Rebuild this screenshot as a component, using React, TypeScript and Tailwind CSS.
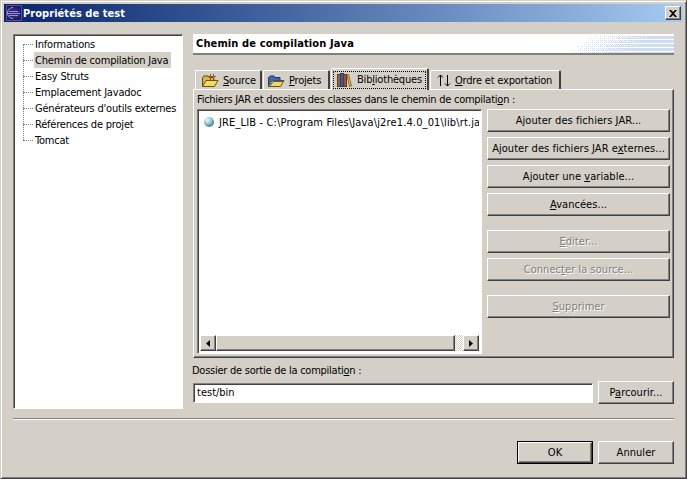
import React from "react";

const raised =
  "border border-t-white border-l-white border-r-[#404040] border-b-[#404040] shadow-[inset_-1px_-1px_0_#808080]";
const sunken =
  "border border-t-[#808080] border-l-[#808080] border-r-white border-b-white shadow-[inset_1px_1px_0_#404040]";

function Btn({ children, disabled, className = "" }: { children: React.ReactNode; disabled?: boolean; className?: string }) {
  return (
    <div
      className={`flex items-center justify-center h-[23px] text-[11px] leading-none tracking-[0.05px] ${raised} ${
        disabled ? "text-[#808080] [text-shadow:1px_1px_0_#fff]" : "text-black"
      } ${className}`}
    >
      <span>{children}</span>
    </div>
  );
}

const FolderOpen = ({ blue }: { blue?: boolean }) => (
  <svg width="18" height="14" viewBox="0 0 18 14" className="shrink-0">
    <path d="M1.500 12.500V3.500L3 2h4l1 1.500h5V6" fill={blue ? "#3f68b0" : "#d8b850"} stroke={blue ? "#203868" : "#5a4a10"} />
    <path d="M1.500 12.500 5 6.500h12l-3.500 6z" fill="#f4d868" stroke="#6a5410" />
    {!blue && <path d="M9.500 0v6M12.500 0v6M7 2.500h8" stroke="#a85020" strokeWidth="1" />}
    {blue && <path d="M3.500 11.500 6 7.500h10" stroke="#3058a0" strokeWidth="1" fill="none" />}
  </svg>
);

const Books = () => (
  <svg width="15" height="14" viewBox="0 0 15 14" className="shrink-0">
    <rect x="0.500" y="1.500" width="3" height="12" fill="#8a6a38" stroke="#5a4020" />
    <rect x="3.500" y="0.500" width="3" height="13" fill="#3c5ca0" stroke="#283c68" />
    <rect x="6.500" y="1.500" width="3" height="12" fill="#a8483a" stroke="#6a3020" />
    <path d="M10 2l1.500-.5 3 11.500-2 .5z" fill="#e8c458" stroke="#8a6a28" />
  </svg>
);

const Arrows = () => (
  <svg width="14" height="13" viewBox="0 0 14 13" className="shrink-0" fill="none" stroke="#000">
    <path d="M3.500 12V1M1 3.500 3.500 1 6 3.500M10.500 1v11M8 9.500 10.500 12 13 9.500" />
  </svg>
);

const Gem = () => (
  <svg width="12" height="12" viewBox="0 0 12 12" className="shrink-0">
    <defs>
      <radialGradient id="g" cx="0.35" cy="0.3" r="0.8">
        <stop offset="0" stopColor="#f4fbfa" />
        <stop offset="0.5" stopColor="#8fc4c8" />
        <stop offset="1" stopColor="#2f6a80" />
      </radialGradient>
    </defs>
    <circle cx="6" cy="6" r="5" fill="url(#g)" />
  </svg>
);

const AppIcon = () => (
  <svg width="16" height="16" viewBox="0 0 16 16" className="shrink-0">
    <rect x="0.500" y="0.500" width="15" height="15" fill="#1e1a60" stroke="#5a4ca8" />
    <circle cx="9" cy="8" r="5.500" fill="#2c2878" />
    <path d="M7 2.500a5.500 5.500 0 0 0 0 11" stroke="#a8a0e0" fill="none" />
    <path d="M3 6.500h9M2 8.500h12M3 10.500h9" stroke="#9890d8" strokeWidth="1" />
  </svg>
);

const Tab = ({ icon, children, active, width, lead = "pl-[5px]" }: { icon: React.ReactNode; children: React.ReactNode; active?: boolean; width: string; lead?: string }) => (
  <div
    className={`relative flex items-center border-l border-t border-white border-r-2 border-r-[#404040] rounded-t-[2px] text-[11px] leading-none text-black tracking-[-0.2px] ${width} ${
      active ? "h-[22px] -mb-px z-10 bg-[#d4d0c8] pl-[1px] pr-[1px]" : `h-[19px] ${lead} pt-[1px]`
    }`}
  >
    <div className={`flex items-center gap-[4px] ${active ? "h-[18px] flex-1 pl-[4px] gap-[5px] outline outline-1 outline-dotted outline-black -outline-offset-1" : ""}`}>
      {icon}
      <span>{children}</span>
    </div>
  </div>
);

const treeItems = [
  "Informations",
  "Chemin de compilation Java",
  "Easy Struts",
  "Emplacement Javadoc",
  "Générateurs d'outils externes",
  "Références de projet",
  "Tomcat",
];

const ScrollBtn = ({ dir }: { dir: "l" | "r" }) => (
  <div className={`w-4 h-4 flex items-center justify-center shrink-0 bg-[#d4d0c8] ${raised}`}>
    <svg width="4" height="7" viewBox="0 0 4 7">
      <path d={dir === "l" ? "M4 0v7L0 3.500z" : "M0 0v7l4-3.500z"} fill="#000" />
    </svg>
  </div>
);

const bayer = [
  [0, 8, 2, 10],
  [12, 4, 14, 6],
  [3, 11, 1, 9],
  [15, 7, 13, 5],
];

const Banner = () => {
  const dots: React.ReactNode[] = [];
  for (let y = 2; y < 19; y += 1) {
    if (y % 4 === 1) continue;
    for (let x = 0; x < 104; x += 1) {
      const d = Math.min(1, Math.max(0, (x - 8 + (y - 10) * 1.500) / 60));
      if (d > (bayer[y % 4][x % 4] + 0.5) / 16) {
        dots.push(<rect key={`${x}-${y}`} x={x} y={y} width="1" height="1" fill="#d0dcf0" />);
      }
    }
  }
  return (
    <svg width="104" height="19" viewBox="0 0 104 19" className="absolute right-0 top-0">
      {dots}
    </svg>
  );
};

export default function App() {
  return (
    <div className="w-[687px] h-[479px] bg-[#d4d0c8] border border-t-[#d4d0c8] border-l-[#d4d0c8] border-r-[#404040] border-b-[#404040] shadow-[inset_1px_1px_0_#fff,inset_-1px_-1px_0_#808080] p-[3px] text-black overflow-hidden font-['DejaVu_Sans_Condensed','DejaVu_Sans',sans-serif] [font-stretch:condensed]">
      {/* title bar */}
      <div className="h-[18px] flex items-center bg-gradient-to-r from-[#0a246a] to-[#a6caf0] pl-[2px] pr-[2px]">
        <AppIcon />
        <span className="ml-px text-[11px] font-bold text-white leading-none tracking-[0.05px]">Propriétés de test</span>
        <div className={`ml-auto w-4 h-[14px] flex items-center justify-center bg-[#d4d0c8] ${raised}`}>
          <svg width="8" height="7" viewBox="0 0 8 7">
            <path d="M0 0h2l2 2 2-2h2L5 3.500 8 7H6L4 5 2 7H0l3-3.500z" fill="#000" />
          </svg>
        </div>
      </div>

      {/* body */}
      <div className="flex gap-[10px] pl-[9px] pr-[9px] mt-[12px]">
        <div className={`w-[170px] h-[375px] bg-white shrink-0 ${sunken} pl-[9px] pt-px`}>
          <div className="relative">
            <div className="absolute left-[0px] top-[8px] h-[96px] border-l border-dotted border-[#808080]" />
            {treeItems.map((t, i) => (
              <div key={t} className="flex items-center h-4">
                <span className="w-[10px] border-t border-dotted border-[#808080] shrink-0" />
                <span className={`ml-px px-[1px] pr-[3px] h-4 flex items-center text-[11px] whitespace-nowrap leading-none tracking-[-0.2px] ${i === 1 ? "bg-[#d4d0c8]" : ""}`}>{t}</span>
              </div>
            ))}
          </div>
        </div>

        <div className="w-[481px] flex flex-col shrink-0">
          <div className="relative h-[21px] bg-white border-b-2 border-b-[#808080] flex items-center pl-[3px] text-[11px] font-bold leading-none overflow-hidden tracking-[0.12px]">
            Chemin de compilation Java
            <Banner />
          </div>

          <div className="flex items-end h-[34px] pl-[2px] gap-[1px] ">
            <Tab width="w-[67px]" icon={<FolderOpen />}><u>S</u>ource</Tab>
            <Tab width="w-[67px]" lead="pl-[3px]" icon={<FolderOpen blue />}><u>P</u>rojets</Tab>
            <Tab width="w-[98px]" active icon={<Books />}>Bib<u>l</u>iothèques</Tab>
            <Tab width="w-[131px]" lead="pl-[6px]" icon={<Arrows />}><u>O</u>rdre et exportation</Tab>
          </div>

          <div className={`h-[269px] ${raised} pl-[3px] pr-[3px] pt-[1px]`}>
            <div className="h-[17px] flex items-center text-[11px] leading-none tracking-[-0.25px]">
              Fichiers JAR et dossiers des classes dans le chemin de compilati<u>o</u>n :
            </div>
            <div className="flex gap-[5px] mt-[1px]">
              <div className={`w-[285px] h-[245px] bg-white ${sunken} flex flex-col p-[2px] shrink-0`}>
                <div className="flex-1 flex items-start gap-[4px] pl-[3px] pt-[4px] text-[11px] leading-none overflow-hidden whitespace-nowrap tracking-[0.14px]">
                  <Gem />
                  <span className="pt-[1px]">JRE_LIB - C:\Program Files\Java\j2re1.4.0_01\lib\rt.jar</span>
                </div>
                <div className="flex h-4 bg-[#d4d0c8]">
                  <ScrollBtn dir="l" />
                  <div className={`flex-1 ${raised}`} />
                  <div className="w-2 bg-[repeating-conic-gradient(#fff_0_25%,#d4d0c8_0_50%)] bg-[length:2px_2px]" />
                  <ScrollBtn dir="r" />
                </div>
              </div>
              <div className="flex-1 flex flex-col">
                <Btn>Ajouter des fichiers <u>J</u>AR...</Btn>
                <Btn className="mt-[5px]">Ajouter des fichiers JAR e<u>x</u>ternes...</Btn>
                <Btn className="mt-[5px]">Ajouter une <u>v</u>ariable...</Btn>
                <Btn className="mt-[5px]"><u>A</u>vancées...</Btn>
                <Btn disabled className="mt-[14px]"><u>E</u>diter...</Btn>
                <Btn disabled className="mt-[5px]">Connec<u>t</u>er la source...</Btn>
                <Btn disabled className="mt-[14px]"><u>S</u>upprimer</Btn>
              </div>
            </div>
          </div>

          <div className="h-[14px] mt-[5px] flex items-center text-[11px] leading-none -ml-[1px] tracking-[-0.25px]">
            Dossier de sortie de la compilati<u>o</u>n :
          </div>
          <div className="flex gap-[5px] items-center mt-[4px]">
            <div className={`w-[400px] h-[20px] bg-white ${sunken} flex items-center pl-[3px] text-[11px] leading-none`}>test/bin</div>
            <Btn className="w-[76px]">P<u>a</u>rcourir...</Btn>
          </div>
        </div>
      </div>

      <div className="mx-[9px] mt-[9px] h-[2px] border-t border-t-[#808080] border-b border-b-white" />

      <div className="flex justify-end gap-[5px] pr-[9px] mt-[21px]">
        <div className="w-[76px] h-[23px] border border-black">
          <Btn className="h-[21px]! w-full">OK</Btn>
        </div>
        <Btn className="w-[76px]">Annuler</Btn>
      </div>
    </div>
  );
}
